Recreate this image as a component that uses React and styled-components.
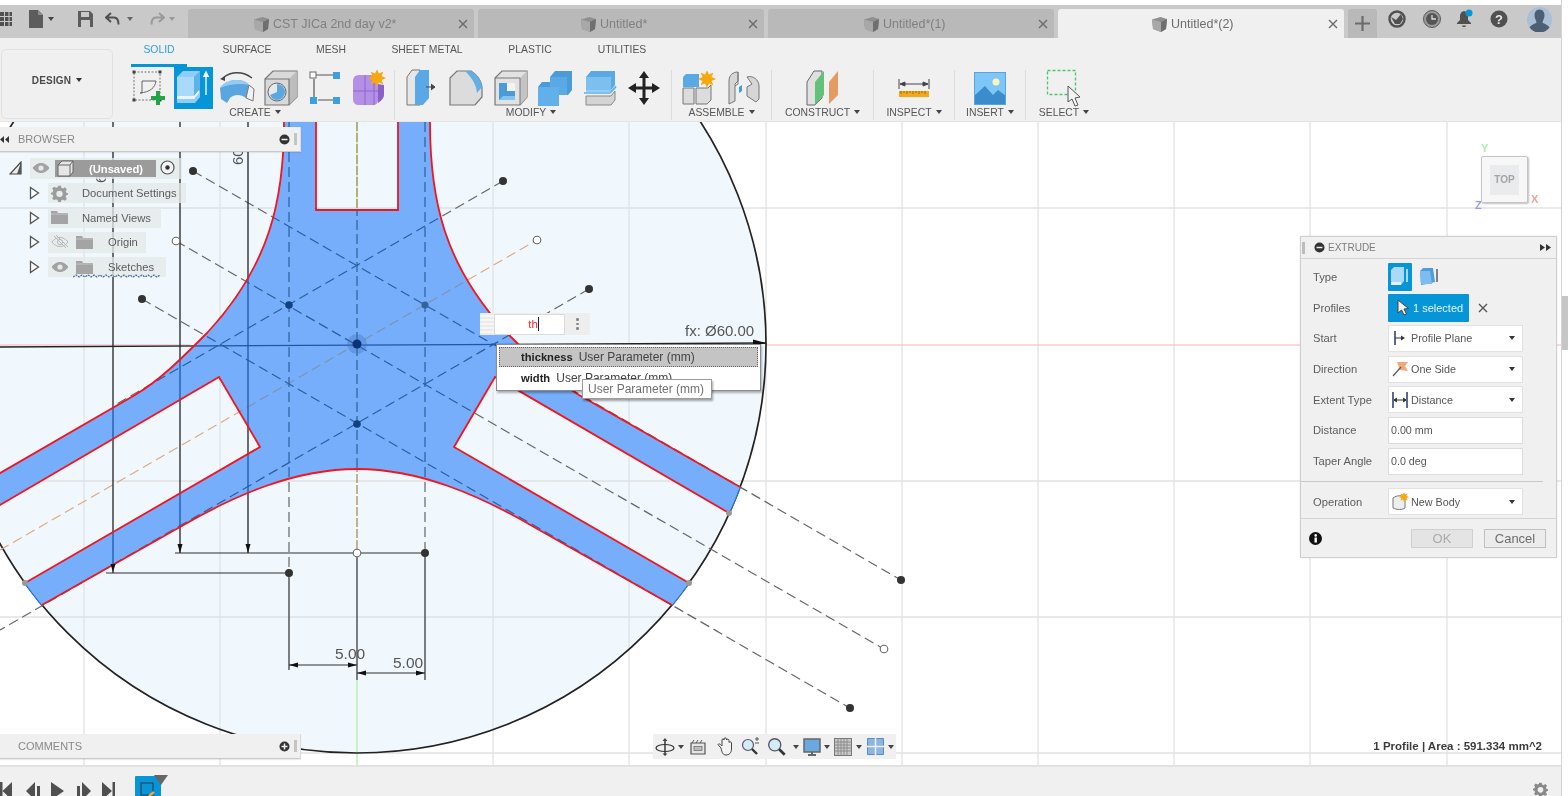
import React from "react";
import styled, { createGlobalStyle, css } from "styled-components";

const Global = createGlobalStyle`
  html, body { margin: 0; padding: 0; background: #fff; overflow: hidden; }
  * { box-sizing: border-box; }
  #root { width: 1568px; height: 796px; }
`;
const FONT = `"Liberation Sans", Arial, sans-serif`;

const Page = styled.div`
  width: 1568px; height: 796px; display: flex; overflow: hidden; background: #fff;
  font-family: ${FONT}; filter: blur(0.4px);
`;
const Screen = styled.div`width: 1561px; height: 796px; display: flex; flex-direction: column; padding-top: 5px; flex: none;`;
const ScrollStrip = styled.div`width: 7px; height: 796px; background: #fff; border-left: 1px solid #d4d4d4; padding-top: 296px; flex: none;`;
const ScrollThumb = styled.div`height: 54px; background: #c6c6c6;`;

/* ---------- title bar ---------- */
const TitleBar = styled.div`height: 33px; background: #c9c9c9; display: flex; align-items: flex-end; flex: none;`;
const Quick = styled.div`width: 188px; height: 33px; flex: none; display: flex; align-items: center; position: relative; padding-bottom: 5px;`;
const QuickSlot = styled.div`width: ${p => p.$w}px; display: flex; align-items: center; flex: none;`;
const Caret = styled.span`
  display: inline-block; flex: none; width: 0; height: 0;
  border-left: ${p => p.$s || 3}px solid transparent; border-right: ${p => p.$s || 3}px solid transparent;
  border-top: ${p => (p.$s || 3) + 1}px solid ${p => p.$c || "#444"}; margin-left: ${p => p.$ml ?? 4}px;
`;
const DocTab = styled.div`
  width: 286px; height: 29px; margin-right: 4px; flex: none; display: flex; align-items: center; position: relative;
  background: ${p => (p.$active ? "#f0f0f0" : "#b9b9b9")}; color: ${p => (p.$active ? "#6c6c6c" : "#808080")};
  font-size: 12.5px; border-radius: 3px 3px 0 0; padding: 1px 0 0 ${p => p.$pl}px; gap: 3px;
`;
const TabClose = styled.span`position: absolute; right: 5px; top: 9px; width: 12px; height: 12px; display: flex;`;
const PlusTab = styled.div`width: 29px; height: 29px; background: #b9b9b9; border-radius: 3px 3px 0 0; display: flex; align-items: center; justify-content: center; flex: none;`;
const TopIcons = styled.div`display: flex; height: 33px; align-items: center; padding-bottom: 5px; position: relative; flex: none;`;
const TopIcon = styled.div`width: ${p => p.$w}px; display: flex; justify-content: center; flex: none;`;

/* ---------- ribbon ---------- */
const Ribbon = styled.div`height: 84px; background: #f0f0f0; display: flex; flex: none; border-bottom: 1px solid #e4e4e4;`;
const DesignCol = styled.div`width: 124px; flex: none; padding: 11px 11px 2px 1px;`;
const DesignBtn = styled.div`
  height: 70px; border: 1px solid #e2e2e2; border-radius: 5px; display: flex; align-items: center; justify-content: center;
  font-size: 10px; font-weight: bold; color: #4a4a4a; letter-spacing: .2px; padding-bottom: 8px;
`;
const RibbonMain = styled.div`display: flex; flex-direction: column;`;
const RibbonTabs = styled.div`height: 29px; display: flex; padding-left: 7px;`;
const RibbonTab = styled.div`
  width: ${p => p.$w}px; height: 29px; padding-top: 6px; text-align: center; font-size: 10.4px; line-height: 12px;
  color: ${p => (p.$active ? "#2c9fdc" : "#555")};
  ${p => p.$active && css`border-bottom: 3px solid #0696d7; border-radius: 2px 2px 0 0;`}
`;
const Groups = styled.div`display: flex; height: 54px;`;
const Group = styled.div`width: ${p => p.$w}px; display: flex; flex-direction: column; align-items: center; flex: none;`;
const Tools = styled.div`height: 42px; display: flex; justify-content: center; flex: none;`;
const Tool = styled.div`
  width: ${p => p.$w || 44}px; height: 42px; flex: none; display: flex; align-items: center; justify-content: center;
  ${p => p.$active && css`background: #0696d7; width: 39px; margin: 0 2.5px;`}
`;
const GroupLabel = styled.div`
  height: 12px; flex: none; display: flex; align-items: center; font-size: 10.4px; color: #555; margin-top: -3px; padding-right: ${p => p.$pr || 0}px;
`;
const Sep = styled.div`width: 1px; height: 50px; margin-top: 3px; background: #dcdcdc; flex: none;`;

/* ---------- canvas ---------- */
const Canvas = styled.div`position: relative; flex: 1; background: #fff; overflow: hidden;`;
const Drawing = styled.svg`position: absolute; left: 0; top: 0; width: 1561px; height: 643px; display: block;`;

const SidePanel = styled.div`
  position: absolute; left: 0; top: ${p => p.$top}px; width: 301px; height: 25px; background: #f0f0f0;
  border-right: 1px solid #dcdcdc; border-bottom: 1px solid #c8c8c8; display: flex; align-items: center; padding-left: 18px;
  font-size: 11px; color: #888; box-shadow: 0 1px 1px rgba(0,0,0,.08);
`;
const PanelEnd = styled.div`position: absolute; right: 3px; top: 6px; display: flex; align-items: center; gap: 4px;`;
const Handle = styled.div`width: 3px; height: 12px; background: #c4c4c4;`;
const PanelLeft = styled.div`position: absolute; left: 0; top: 9px; display: flex;`;

const Tree = styled.div`position: absolute; left: 0; top: 36px; display: flex; flex-direction: column; gap: 4px;`;
const TreeRow = styled.div`height: 20.7px; display: flex; align-items: center; padding-left: ${p => p.$pl}px;`;
const Chip = styled.div`
  display: flex; align-items: center; height: 20.7px; width: ${p => p.$w}px; margin-left: ${p => p.$ml}px; position: relative;
  background: rgba(228,232,232,.78); font-size: 11.2px; color: #5c5c5c; flex: none;
`;
const ChipText = styled.span`position: absolute; left: ${p => p.$l}px; white-space: nowrap;`;
const ChipIcon = styled.span`position: absolute; left: ${p => p.$l}px; top: 2px; display: flex;`;
const SelBar = styled.div`
  position: absolute; left: 25px; top: 2px; width: 101px; height: 17px; background: #9b9b9b; color: #fff; font-weight: bold;
  font-size: 11.2px; display: flex; align-items: center; padding-left: 34px;
`;
const Wave = styled.svg`position: absolute; left: 25px; bottom: -1px;`;

const NavBar = styled.div`
  position: absolute; left: 653px; top: 612px; width: 243px; height: 25px; background: #f0f0f0; display: flex; align-items: center; padding-left: 2px;
`;
const NavSlot = styled.div`width: ${p => p.$w}px; display: flex; align-items: center; flex: none;`;
const Status = styled.div`position: absolute; right: 19px; top: 618px; font-size: 11.5px; font-weight: bold; color: #3c3c3c; white-space: nowrap;`;

/* view cube */
const Cube = styled.div`
  position: absolute; left: 1481px; top: 34px; width: 47px; height: 47px; background: #f7f7f7; border: 1px solid #c4c4c4;
  border-radius: 2px; box-shadow: 1px 1px 2px rgba(0,0,0,.25); display: flex; align-items: center; justify-content: center;
`;
const CubeFace = styled.div`width: 29px; height: 30px; background: #e9ebed; font-size: 10px; font-weight: bold; color: #a4a4a4; display: flex; align-items: center; justify-content: center;`;
const AxisLetter = styled.span`position: absolute; left: ${p => p.$l}px; top: ${p => p.$t}px; font-size: 11px; font-weight: bold; color: ${p => p.$c};`;

/* dimension input */
const DimBox = styled.div`position: absolute; left: 480px; top: 191px; width: 110px; height: 22px; display: flex; background: #eeeeee; align-items: center;`;
const Grip = styled.div`width: 14px; height: 22px; background: repeating-linear-gradient(0deg,#ebebeb 0 2px,#f6f6f6 2px 4px);`;
const DimInput = styled.div`width: 71px; height: 21px; background: #fff; border: 1px solid #dcdcdc; display: flex; align-items: center; justify-content: center; font-size: 11.5px; color: #ee2a2a; padding-left: 8px;`;
const TextCaret = styled.span`display: inline-block; width: 1px; height: 14px; background: #222;`;
const Kebab = styled.div`flex: 1; display: flex; flex-direction: column; align-items: center; gap: 2px;`;
const Dot = styled.span`width: 2.5px; height: 2.5px; background: #888; border-radius: 50%;`;

const Drop = styled.div`
  position: absolute; left: 496px; top: 222px; width: 265px; height: 47px; background: #fff; border: 1px solid #8c8c8c;
  box-shadow: 1px 2px 2px rgba(0,0,0,.3); padding: 2px 2px; font-size: 12px; color: #444;
`;
const DropRow = styled.div`
  height: ${p => (p.$on ? 20 : 22)}px; display: flex; align-items: center; padding-left: 22px; white-space: nowrap;
  ${p => p.$on && css`background: #c4c4c4; outline: 1px dotted #666; outline-offset: -1px;`}
`;
const DropKey = styled.b`color: #222; margin-right: 6px; font-size: 11.2px;`;
const Tip = styled.div`
  position: absolute; left: 582px; top: 257px; width: 130px; height: 20px; background: #fff; border: 1px solid #9a9a9a;
  box-shadow: 1px 2px 2px rgba(0,0,0,.35); font-size: 12px; color: #707070; display: flex; align-items: center; padding-left: 5px; white-space: nowrap;
`;

/* extrude */
const Panel = styled.div`
  position: absolute; left: 1300px; top: 114px; width: 257px; height: 322px; background: #f0f0f0; border: 1px solid #cfcfcf;
  box-shadow: 0 0 2px rgba(0,0,0,.1); display: flex; flex-direction: column; font-size: 11px; color: #555;
`;
const PanelHead = styled.div`height: 22px; flex: none; border-bottom: 1px solid #d4d4d4; display: flex; align-items: center; padding: 0 5px 0 1px; color: #7c7c7c; font-size: 10px;`;
const HeadGrip = styled.div`width: 3px; height: 12px; background: #bdbdbd; margin-right: 9px;`;
const HeadTitle = styled.span`margin-left: 3px;`;
const Spacer = styled.div`flex: 1;`;
const PanelBody = styled.div`padding: 2.6px 0 1px 12px; flex: none;`;
const Row = styled.div`height: 30.7px; display: flex; align-items: center;`;
const RowLabel = styled.div`width: 75px; flex: none; font-size: 11.2px; color: #5c5c5c; white-space: nowrap;`;
const Selector = styled.div`
  width: 135px; height: 27px; background: #fff; border: 1px solid #e2e2e2; display: flex; align-items: center; padding: 0 7px 0 2px; gap: 2px;
  font-size: 10.8px; color: #555; white-space: nowrap;
`;
const Input = styled(Selector)`padding-left: 2px; border-color: #dcdcdc; font-size: 10.7px;`;
const TypeBtn = styled.div`width: 24px; height: 28px; display: flex; align-items: center; justify-content: center; border-radius: 1px; margin-right: 5px; ${p => p.$on && css`background: #0696d7;`}`;
const PickBtn = styled.div`width: 81px; height: 28px; background: #0696d7; color: #e6f4fb; display: flex; align-items: center; padding-left: 8px; gap: 4px; font-size: 11px; border-radius: 1px;`;
const ClearX = styled.div`margin-left: 8px; display: flex;`;
const Rule = styled.div`height: 1px; width: 242px; background: #c8c8c8; margin-top: 5px; margin-left: -12px; margin-bottom: 4px;`;
const PanelFoot = styled.div`flex: 1; border-top: 1px solid #d4d4d4; display: flex; align-items: center; padding: 0 10px 0 8px; gap: 11px;`;
const FootBtn = styled.div`width: 62px; height: 19px; border: 1px solid ${p => (p.$off ? "#d0d0d0" : "#c0c0c0")}; background: ${p => (p.$off ? "#e4e4e4" : "#ececec")}; display: flex; align-items: center; justify-content: center; font-size: 13px; color: ${p => (p.$off ? "#aaa" : "#6c6c6c")};`;

/* timeline */
const Timeline = styled.div`height: 31px; flex: none; background: #f0f0f0; border-top: 2px solid #e2e2e2; display: flex; position: relative; overflow: hidden;`;
const Player = styled.div`display: flex; width: 135px; flex: none; padding-top: 15px;`;
const PlayBtn = styled.div`width: 25.6px; flex: none; display: flex;`;
const Feature = styled.div`position: relative; width: 26px; height: 22px; margin-top: 9px; background: #0696d7; border-radius: 1px 1px 0 0; display: flex; justify-content: center; padding-top: 6px;`;
const Flag = styled.div`position: absolute; right: -7px; top: -1px; width: 0; height: 0; border-left: 7px solid transparent; border-right: 7px solid transparent; border-top: 10px solid #666;`;
const GearEnd = styled.div`margin-left: auto; margin-right: 13px; padding-top: 15px;`;

/* ---------- icons ---------- */
const Cube3D = ({ s = 17 }) => (
  <svg width={s} height={s} viewBox="0 0 17 17"><path d="M1 3.5 9.5 1 16 3l-1 10-5 3L2 13Z" fill="#8f8f8f"/><path d="M1 3.5 10 6v10L2 13Z" fill="#a8a8a8"/><path d="M10 6l6-3-1 10-5 3Z" fill="#6f6f6f"/></svg>
);
const X = ({ c = "#6a6a6a", s = 12 }) => (
  <svg width={s} height={s} viewBox="0 0 12 12"><path d="M2 2l8 8M10 2l-8 8" stroke={c} strokeWidth="1.4"/></svg>
);
const Eye = ({ off }) => (
  <svg width="18" height="16" viewBox="0 0 18 16"><path d="M1 8c4-6 12-6 16 0-4 6-12 6-16 0Z" fill={off ? "none" : "#a2a2a2"} stroke={off ? "#b8b8b8" : "#a2a2a2"}/><circle cx="9" cy="8" r="2.6" fill={off ? "none" : "#e4e8e8"} stroke={off ? "#b8b8b8" : "none"}/>{off && <path d="M3 2l12 12M5 1l12 12" stroke="#b8b8b8"/>}</svg>
);
const Folder = () => (
  <svg width="17" height="16" viewBox="0 0 17 16"><path d="M0 2h6l1 2h10v11H0Z" fill="#a4a4a4"/><path d="M0 5h17" stroke="#c4c4c4"/></svg>
);
const Gear = ({ c = "#9c9c9c", s = 17 }) => (
  <svg width={s} height={s} viewBox="0 0 24 24"><path fillRule="evenodd" d="M10 1h4l.6 3 2.4 1 2.6-1.7 2.8 2.800L20.700 8.700l1 2.400 3 .6v2l-3 .9-1 2.400 1.700 2.600-2.800 2.800-2.600-1.700-2.400 1L14 24h-4l-.6-3-2.400-1-2.600 1.700-2.800-2.800 1.700-2.600-1-2.400L-.7 13v-2l3-.9 1-2.400L1.600 5.100 4.400 2.300 7 4l2.400-1ZM12 8a4.500 4.500 0 1 0 0 9 4.500 4.500 0 0 0 0-9Z" fill={c}/></svg>
);
const Tri = () => (
  <svg width="11" height="14" viewBox="0 0 11 14"><path d="M1.500 1.500v11l8-5.500Z" fill="#fff" stroke="#555" strokeWidth="1.300"/></svg>
);
const CircMinus = ({ plus }) => (
  <svg width="11" height="11" viewBox="0 0 11 11"><circle cx="5.500" cy="5.500" r="5" fill="#333"/><path d="M2.500 5.500h6" stroke="#eee" strokeWidth="1.500"/>{plus && <path d="M5.500 2.500v6" stroke="#eee" strokeWidth="1.500"/>}</svg>
);
const SketchI = () => (
  <svg width="34" height="38" viewBox="0 0 34 38"><rect x="2" y="3" width="26" height="28" fill="none" stroke="#777" strokeDasharray="2 1.500"/>
    {[[2,3],[28,3],[2,31],[28,31]].map(([x,y],i)=><rect key={i} x={x-1.500} y={y-1.500} width="3" height="3" fill="#444"/>)}
    <path d="M8 24h2V12h14M8 24c10-1 15-5 16-12" fill="none" stroke="#666"/>
    <path d="M24 22h4v5h5v4h-5v5h-4v-5h-5v-4h5Z" fill="#22a547"/></svg>
);
const ExtrudeI = () => (
  <svg width="36" height="38" viewBox="0 0 36 38"><path d="M2 8 8 2h17v26l-5 6H2Z" fill="#8fcdf6"/><path d="M19 8l6-6v19l-6 6Z" fill="#5db2ea"/><path d="M2 8h17v19H2Z" fill="#a9daf9"/><path d="M2 27h17l5-6v3l-5 6H2Z" fill="#eaf4fa"/><path d="M31 26V5M28.500 8 31 3l2.500 5" stroke="#fff" fill="#fff" strokeWidth="1.300"/></svg>
);
const RevolveI = () => (
  <svg width="36" height="36" viewBox="0 0 36 36"><path d="M4 8C12 1 24 1 33 8" fill="none" stroke="#444" strokeWidth="1.300"/><path d="M1 9l5-3v5Z" fill="#444"/><path d="M1 18C8 8 25 8 30 15l-3 13c-5-4-12-4-16 0l-3 5-6-4Z" fill="#5aa6e0"/><path d="M1 18C8 8 25 8 30 15c-8-2-20-1-29 3Z" fill="#93cbf2"/><path d="M30 15l5 4-1 12-7-3Z" fill="#f2f2f2" stroke="#777"/></svg>
);
const HoleI = () => (
  <svg width="34" height="36" viewBox="0 0 34 36"><path d="M1 9 9 1h24v26l-8 8H1Z" fill="#d9d9d9" stroke="#777" strokeWidth="1.200"/><path d="M25 9l8-8v26l-8 8Z" fill="#bcbcbc"/><path d="M1 9h24v26" fill="none" stroke="#777" strokeWidth="1.200"/><circle cx="13" cy="22" r="9" fill="#e8e8e8" stroke="#666"/><path d="M13 22V14a8 8 0 0 1 0 16c-3 0-6-2-7-5Z" fill="#5aa8e0"/></svg>
);
const NodesI = () => (
  <svg width="32" height="34" viewBox="0 0 32 34"><path d="M7 4h18M5 8v19M9 29h17" stroke="#555" strokeWidth="1.200"/><rect x="1" y="1" width="6" height="6" fill="#fff" stroke="#666"/><rect x="24" y="1" width="7" height="7" fill="#3e9fe0"/><rect x="1" y="26" width="7" height="7" fill="#3e9fe0"/><rect x="24" y="26" width="7" height="7" fill="#3e9fe0"/></svg>
);
const Sun = ({ x, y, r = 8 }) => {
  const pts = [];
  for (let i = 0; i < 16; i++) { const a = i * Math.PI / 8; const q = i % 2 ? r * .55 : r; pts.push(`${x + q * Math.cos(a)},${y + q * Math.sin(a)}`); }
  return <polygon points={pts.join(" ")} fill="#f7a80f"/>;
};
const PurpleI = () => (
  <svg width="34" height="36" viewBox="0 0 34 36"><path d="M1 11 Q1 5 7 5h19v25q0 5-5 5H7q-6 0-6-6Z" fill="#b48fe6"/><path d="M1 21h25M13 5v30M22 9v26" stroke="#8d66c8"/><path d="M26 14l6 1v10q0 4-6 8Z" fill="#8a60c6"/><Sun x={25} y={8} r={9}/></svg>
);
const PressI = () => (
  <svg width="32" height="38" viewBox="0 0 32 38"><path d="M1 8 6 1h8v35H1Z" fill="#e6e6e6" stroke="#777"/><path d="M9 8l5-7h9v28l-6 7H9Z" fill="#5aa9e6"/><path d="M20 18h8M25 15l4 3-4 3" stroke="#444" fill="#444"/></svg>
);
const FilletI = () => (
  <svg width="34" height="36" viewBox="0 0 34 36"><path d="M1 8 8 1h14c6 4 10 8 11 16v10l-7 8H1Z" fill="#dcdcdc" stroke="#777" strokeWidth="1.200"/><path d="M16 1h6c6 4 10 8 11 16l-5 6c-1-9-5-15-12-22Z" fill="#62afe6"/></svg>
);
const ChamferI = () => (
  <svg width="34" height="36" viewBox="0 0 34 36"><path d="M1 8 8 1h25v26l-7 8H1Z" fill="#e2e2e2" stroke="#777" strokeWidth="1.200"/><path d="M26 8l7-7v26l-7 8Z" fill="#c4c4c4"/><path d="M1 8h25v27" fill="none" stroke="#777"/><path d="M5 13h8v8h8v9H5Z" fill="#4a9bd6"/><path d="M13 13h8v8h-8Z" fill="#f3f3f3"/><path d="M5 30l4-4h12v4Z" fill="#83c3f0"/></svg>
);
const CombineI = () => (
  <svg width="36" height="36" viewBox="0 0 36 36"><path d="M13 7 18 1h17v19l-4 5H22v8l-3 3H1V17l4-5h8Z" fill="#4a9bd6"/><path d="M13 7h17v18h-8v-8H13Z" fill="#58a9e4"/><path d="M1 17h21v19H1Z" fill="#62b0ea"/></svg>
);
const OffsetI = () => (
  <svg width="34" height="36" viewBox="0 0 34 36"><path d="M3 7 8 1h24v14l-4 5H3Z" fill="#5aa9e4"/><path d="M3 7h25v13H3Z" fill="#7cc0f0"/><path d="M3 21h25l5-5" stroke="#7cc0f4" fill="none" strokeWidth="1.500"/><path d="M1 23h26l6-6" stroke="#5ab0ee" fill="none" strokeWidth="1.500"/><path d="M3 26h25l4-5v9l-4 5H3Z" fill="#d4d4d4" stroke="#888"/></svg>
);
const MoveI = () => (
  <svg width="34" height="36" viewBox="0 0 34 36"><path d="M17 1l5 7h-3.500v8.500H25V13l8 5-8 5v-3.500h-6.500V28H22l-5 7-5-7h3.500v-8.500H9V23l-8-5 8-5v3.500h6.500V8H12Z" fill="#222"/></svg>
);
const AssembleI = () => (
  <svg width="34" height="34" viewBox="0 0 34 34"><path d="M1 17h11v16H1ZM14 17h12l3 -3v15l-4 4H14Z" fill="#dcdcdc" stroke="#777"/><path d="M1 6l3-3h13v13H1Z" fill="#58a9e4"/><Sun x={25} y={8} r={9}/></svg>
);
const JointI = () => (
  <svg width="32" height="34" viewBox="0 0 32 34"><path d="M1 10c0-6 4-9 9-9v9l-3 3v17l-6 3Z" fill="#d6d6d6" stroke="#777"/><path d="M10 1v12l-3 2" fill="none" stroke="#777"/><path d="M19 6c6-2 12 3 12 9v13l-3 3-9-6V16l5-3Z" fill="#d6d6d6" stroke="#777"/><path d="M11 16l3-2v6l-3 2Z" fill="#3e9fe0"/></svg>
);
const ConstructI = () => (
  <svg width="34" height="36" viewBox="0 0 34 36"><path d="M1 12 8 1h8v27l-7 7H1Z" fill="#e0e0e0" stroke="#666"/><path d="M9 35V12l9-11v24Z" fill="#62c27a"/><path d="M23 34V12l9-11v24Z" fill="#e59a64"/></svg>
);
const InspectI = () => (
  <svg width="32" height="20" viewBox="0 0 32 20"><path d="M1 1v10M31 1v10M2 6h28M2 6l5-2v4ZM30 6l-5-2v4Z" stroke="#444" fill="#444"/><rect x="1" y="13" width="30" height="6" fill="#f2a81a"/><path d="M3 13v3M6 13v2M9 13v3M12 13v2M15 13v3M18 13v2M21 13v3M24 13v2M27 13v3" stroke="#9a6a10"/></svg>
);
const InsertI = () => (
  <svg width="32" height="33" viewBox="0 0 32 33"><rect width="32" height="33" fill="#7ec6f7"/><circle cx="22" cy="10" r="3.500" fill="#fdf3b8"/><path d="M0 24l11-10 8 9 5-5 8 6v9H0Z" fill="#3a8ccb"/><rect x=".5" y=".5" width="31" height="32" fill="none" stroke="#58a4dc"/></svg>
);
const SelectI = () => (
  <svg width="36" height="38" viewBox="0 0 36 38"><rect x="1.500" y="1.500" width="28" height="24" fill="none" stroke="#4cc46c" strokeWidth="1.300" strokeDasharray="3 2"/><path d="M22 17v16l4-3 3 7 3-1-3-7 5-1Z" fill="#f4f4f4" stroke="#555"/></svg>
);
const Arrow = () => (
  <svg width="13" height="17" viewBox="0 0 13 17"><path d="M2 1v13l3.500-3 2.500 5 2.500-1-2.500-5 4.500-.5Z" fill="#f2f2f2" stroke="#444"/></svg>
);

const Orbit = () => (<svg width="20" height="20" viewBox="0 0 20 20"><path d="M10 1l2.500 3h-1.700v12.500h1.700L10 19l-2.500-2.500h1.700V4H7.500Z" fill="#444"/><ellipse cx="10" cy="11" rx="9" ry="3.500" fill="none" stroke="#333" strokeWidth="1.200"/></svg>);
const LookAt = () => (<svg width="18" height="18" viewBox="0 0 18 18"><path d="M2 5h14v11H2Z" fill="#e4e4e4" stroke="#555" strokeWidth="1.200"/><rect x="5" y="8.500" width="8" height="4" fill="#bbb" stroke="#666" strokeWidth=".7"/><path d="M3 5l2-3M7 5l2-3M11 5l2-3" stroke="#555"/></svg>);
const Hand = () => (<svg width="19" height="19" viewBox="0 0 19 19"><path d="M5 11 2 7.500c1-1.500 2.500 0 4 1.500V3c0-1.600 2-1.600 2 0V2c0-1.500 2.500-1.500 2.500 0v1c.5-1.500 2.500-1 2.500 .5v2c.5-1 2.500-.8 2.500 .5V12c0 4-2.500 6-5.500 6S6 16 5 11Z" fill="#f4f4f4" stroke="#444"/></svg>);
const ZoomI = ({ s = 19, extra }) => (<svg width={s} height={s} viewBox="0 0 19 19"><circle cx="7" cy="8" r="5.500" fill="#d3ecf5" stroke="#556" strokeWidth="1.200"/><path d="M11 12l5 5" stroke="#333" strokeWidth="2.400"/>{extra && <path d="M14 2h4M16 0v4M14 6h4" stroke="#555"/>}</svg>);
const Display = () => (<svg width="18" height="18" viewBox="0 0 18 18"><rect x="1" y="1" width="16" height="13" fill="#6aa8e0" stroke="#666" strokeWidth="1.500"/><path d="M5 17h8M9 14v3" stroke="#666" strokeWidth="2"/></svg>);
const GridI = () => (<svg width="18" height="18" viewBox="0 0 18 18"><rect x=".5" y=".5" width="17" height="17" fill="#c8c8c8" stroke="#777"/><path d="M4 0v18M7 0v18M10 0v18M13 0v18M0 4h18M0 7h18M0 10h18M0 13h18" stroke="#808080" strokeWidth=".8"/></svg>);
const Views = () => (<svg width="17" height="17" viewBox="0 0 17 17"><path d="M.5.5h16v16H.5Z" fill="#8ab6e2" stroke="#5d8bbd"/><path d="M8.500 0v17M0 8.500h17" stroke="#f0f0f0" strokeWidth="1.500"/></svg>);

/* ---------- sketch geometry ---------- */
const SHAPE = "M284 115 L284 122 C284 200 270 265 207 333 C180 360 160 380 135 395 L0 473 L-10 479 L-10 511 L219 377 L260 447 L25 583 A409 409 0 0 0 42 605 L180 527 C235 495 295 469 357 469 C419 469 479 495 534 527 L672 605 A409 409 0 0 0 689 583 L454 447 L495 377 L729 513 A409 409 0 0 0 740 487 L579 395 C554 380 534 360 507 333 C444 265 430 200 430 122 L430 115 L398 115 L398 210 L316 210 L316 115 Z";
const RED = "M284 122 C284 200 270 265 207 333 C180 360 160 380 135 395 L-5 476 M-5 508 L219 377 L260 447 L25 583 M42 605 L180 527 C235 495 295 469 357 469 C419 469 479 495 534 527 L672 605 M689 583 L454 447 L495 377 L729 513 M740 487 L579 395 C554 380 534 360 507 333 C444 265 430 200 430 122 M398 122 L398 210 L316 210 L316 122";
const gridX = [84, 220, 493, 629, 766, 902, 1038, 1174, 1310, 1447];
const gridY = [208, 481, 617, 753];

const Sketch = () => (
  <Drawing viewBox="0 122 1561 643" aria-hidden="true">
    <defs>
      <clipPath id="inShape"><path d={SHAPE}/></clipPath>
      <g id="dashes" fill="none" stroke="currentColor" strokeWidth="1.200" strokeDasharray="10 5">
        <path d="M193 171 L901 580"/>
        <path d="M176 241 L884 649"/>
        <path d="M142 299 L850 708"/>
        <path d="M503 181 L115 405"/>
        <path d="M589 289 L0 630"/>
        <path d="M289 122 V573"/>
        <path d="M425 122 V553"/>
      </g>
      <g id="solids" fill="none" stroke="currentColor" strokeWidth="1.300">
        <path d="M113 122 V573"/>
        <path d="M180 122 V553"/>
        <path d="M248 122 V553"/>
        <path d="M0 347 L766 343"/>
      </g>
    </defs>
    <circle cx="357" cy="344" r="409" fill="#f0f8fe"/>
    <g stroke="#dfe2e3" strokeWidth="1.300">
      {gridX.map(x => <path key={x} d={`M${x} 122V765`}/>)}
      {gridY.map(y => <path key={y} d={`M0 ${y}H1561`}/>)}
    </g>
    <path d="M0 345H190M766 345H1561" stroke="#f6b4b4" strokeWidth="1.200"/>
    <path d="M357 122V210M357 680V765" stroke="#b4f0b4" strokeWidth="1.400"/>
    <circle cx="357" cy="344" r="409" fill="none" stroke="#222" strokeWidth="1.700"/>
    <path d={SHAPE} fill="#76aefc"/>
    <path d="M25 583 A409 409 0 0 0 42 605 M672 605 A409 409 0 0 0 689 583 M729 513 A409 409 0 0 0 740 487" fill="none" stroke="#2a74d8" strokeWidth="2"/>
    <path d="M0 550 L537 240" stroke="#e0ab80" strokeWidth="1.300" strokeDasharray="10 5" fill="none"/>
    <path d="M357 122V553" stroke="#b08a50" strokeWidth="1.300" strokeDasharray="9 2" fill="none"/>
    <g color="#666"><use href="#dashes"/></g>
    <g color="#222"><use href="#solids"/></g>
    <g clipPath="url(#inShape)">
      <path d={SHAPE} fill="#76aefc"/>
      <path d="M0 550 L537 240" stroke="#7f93ad" strokeWidth="1.300" strokeDasharray="10 5" fill="none"/>
      <path d="M357 122V553" stroke="#2f679f" strokeWidth="1.300" strokeDasharray="10 4" fill="none"/>
      <g color="#2b5f9e"><use href="#dashes"/></g>
      <g color="#1f56a6"><use href="#solids"/></g>
    </g>
    <path d={RED} fill="none" stroke="#f4141e" strokeWidth="1.800"/>
    <g fill="none" stroke="#2e2e2e" strokeWidth="1.200">
      <path d="M175 553H357M361 553H425"/>
      <path d="M106 573H289"/>
      <path d="M289 573V670M425 553V680M357 557V680"/>
      <path d="M289 665H357M357 673H425"/>
    </g>
    <g fill="#111">
      <path d="M113 572l-2.500-8h5Z"/><path d="M180 553l-2.500-9h5Z"/><path d="M248 553l-2.500-9h5Z"/>
      <path d="M289 665l9-2.500v5Z"/><path d="M357 665l-9-2.500v5Z"/><path d="M357 673l9-2.500v5Z"/><path d="M425 673l-9-2.500v5Z"/>
      <path d="M766 343l-13-3.500v7Z"/>
    </g>
    <circle cx="357" cy="344" r="10" fill="#3f6fb8" opacity=".35"/>
    <circle cx="357" cy="344" r="4.500" fill="#0b3478"/>
    <g fill="#12417f">
      <circle cx="289" cy="305" r="3.800"/><circle cx="425" cy="305" r="3.500" fill="#33639c"/><circle cx="357" cy="424" r="3.800"/>
    </g>
    <g fill="#333">
      <circle cx="193" cy="171" r="4"/><circle cx="142" cy="299" r="4"/><circle cx="503" cy="181" r="4"/><circle cx="589" cy="289" r="4"/>
      <circle cx="901" cy="580" r="4"/><circle cx="850" cy="708" r="4"/><circle cx="425" cy="553" r="4"/><circle cx="289" cy="573" r="4"/>
    </g>
    <g fill="#fff" stroke="#666" strokeWidth="1.100">
      <circle cx="176" cy="241" r="3.800"/><circle cx="537" cy="240" r="3.800"/><circle cx="884" cy="649" r="3.800"/><circle cx="357" cy="553" r="3.800"/>
    </g>
    <g fill="#999"><circle cx="25" cy="583" r="3"/><circle cx="729" cy="513" r="3"/><circle cx="689" cy="583" r="3"/></g>
    <g fontFamily={FONT} fill="#555">
      <text x="685" y="336" fontSize="15">fx: Ø60.00</text>
      <text x="335" y="659" fontSize="15.500">5.00</text>
      <text x="393" y="668" fontSize="15.500">5.00</text>
      <text transform="translate(243 165) rotate(-90)" fontSize="15">60</text>
      <text transform="translate(106 183) rotate(-90)" fontSize="15">60</text>
    </g>
  </Drawing>
);

const tabs = [
  { t: "CST JICa 2nd day v2*", pl: 65 },
  { t: "Untitled*", pl: 102 },
  { t: "Untitled*(1)", pl: 95 },
  { t: "Untitled*(2)", pl: 93, active: true },
];

const Dropdown = ({ icon, label }) => (
  <Selector>{icon}<span>{label}</span><Spacer/><Caret $c="#333"/></Selector>
);
const StartI = () => (<svg width="18" height="18" viewBox="0 0 18 18"><path d="M4 2v14" stroke="#1e3a6a" strokeWidth="1.500"/><path d="M4 9h7" stroke="#333"/><path d="M14 9l-4-2.500v5Z" fill="#333"/></svg>);
const DirI = () => (<svg width="18" height="18" viewBox="0 0 18 18"><path d="M6 2h11l-3 4 3 5-8-1Z" fill="#f0a878"/><path d="M2 16 10 7" stroke="#555" strokeWidth="1.200"/></svg>);
const ExtI = () => (<svg width="18" height="18" viewBox="0 0 18 18"><path d="M2 1v16M16 1v16" stroke="#1e3a6a" strokeWidth="1.500"/><path d="M3 9h12M6 7l-3 2 3 2M12 7l3 2-3 2" stroke="#333" fill="#333"/></svg>);
const BodyI = () => (<svg width="18" height="18" viewBox="0 0 18 18"><path d="M2 5c4-3 9-3 12 0v10c-3 2-8 2-12 0Z" fill="#eee" stroke="#777"/><Sun x={13} y={4} r={5}/></svg>);

export default function App() {
  return (
    <Page>
      <Global/>
      <Screen>
        <TitleBar>
          <Quick>
            <QuickSlot $w={29}>
              <svg width="12" height="14" viewBox="0 0 12 14"><path d="M0 0h4v4H0ZM5 0h3.500v4H5ZM9.500 0H12v4H9.500ZM0 5h4v4H0ZM5 5h3.500v4H5ZM9.500 5H12v4H9.500ZM0 10h4v4H0ZM5 10h3.500v4H5ZM9.500 10H12v4H9.500Z" fill="#505050"/></svg>
            </QuickSlot>
            <QuickSlot $w={49}>
              <svg width="14" height="18" viewBox="0 0 14 18"><path d="M0 0h9l5 5v13H0Z" fill="#5c5c5c"/><path d="M9 0v5h5" fill="#8c8c8c"/></svg>
              <Caret $ml={5}/>
            </QuickSlot>
            <QuickSlot $w={27}>
              <svg width="15" height="16" viewBox="0 0 15 16"><path d="M0 0h12l3 3v13H0Z" fill="#5c5c5c"/><rect x="3" y="1" width="8" height="5" fill="#c9c9c9"/><rect x="3" y="9" width="9" height="7" fill="#c9c9c9"/></svg>
            </QuickSlot>
            <QuickSlot $w={45}>
              <svg width="15" height="14" viewBox="0 0 15 14"><path d="M6 1 1 5.500 6 10M1.500 5.500H9c3 0 4.500 2.500 4.500 7" fill="none" stroke="#505050" strokeWidth="2"/></svg>
              <Caret $ml={7} $c="#666"/>
            </QuickSlot>
            <QuickSlot $w={30}>
              <svg width="15" height="14" viewBox="0 0 15 14"><path d="M9 1l5 4.500L9 10M13.500 5.500H6c-3 0-4.500 2.500-4.500 7" fill="none" stroke="#9a9a9a" strokeWidth="2"/></svg>
              <Caret $ml={4} $c="#999"/>
            </QuickSlot>
          </Quick>
          {tabs.map(t => (
            <DocTab key={t.t} $active={t.active} $pl={t.pl}>
              <Cube3D/>
              <span>{t.t}</span>
              <TabClose><X/></TabClose>
            </DocTab>
          ))}
          <PlusTab>
            <svg width="15" height="15" viewBox="0 0 15 15"><path d="M7.500 0v15M0 7.500h15" stroke="#6c6c6c" strokeWidth="2.200"/></svg>
          </PlusTab>
          <TopIcons>
            <TopIcon $w={40}>
              <svg width="18" height="18" viewBox="0 0 18 18"><circle cx="9" cy="9" r="7.500" fill="none" stroke="#505050" strokeWidth="2.400"/><path d="M3 7l5 3 5-6 2 5-3 5H7Z" fill="#505050"/></svg>
            </TopIcon>
            <TopIcon $w={30}>
              <svg width="18" height="18" viewBox="0 0 18 18"><circle cx="9" cy="9" r="8.500" fill="#9a9a9a" stroke="#5a5a5a"/><circle cx="9" cy="9" r="6" fill="#555"/><path d="M9 5v4h4" stroke="#ddd" fill="none" strokeWidth="1.300"/></svg>
            </TopIcon>
            <TopIcon $w={36}>
              <svg width="20" height="20" viewBox="0 0 20 20"><path d="M9 2c-3 .5-4 3-4 5v4l-3 3v1h14v-1l-3-3V7C13 4.500 12 2.500 9 2ZM7 16.500h4c0 2-4 2-4 0Z" fill="#505050"/><circle cx="14" cy="4" r="3.500" fill="#0696d7"/></svg>
            </TopIcon>
            <TopIcon $w={32}>
              <svg width="18" height="18" viewBox="0 0 18 18"><circle cx="9" cy="9" r="8.500" fill="#505050"/><text x="9" y="13.500" textAnchor="middle" fontSize="13" fontWeight="bold" fontFamily={FONT} fill="#e8e8e8">?</text></svg>
            </TopIcon>
            <TopIcon $w={48}>
              <svg width="25" height="25" viewBox="0 0 25 25"><circle cx="12.500" cy="12.500" r="12.500" fill="#a9bfd6"/><path d="M12.500 2.500c3.500 0 5 3 5 6 0 3-2 5.500-2 7 0 1 5 1.500 7 5a12.500 12.500 0 0 1-20 0c2-3.500 7-4 7-5 0-1.500-2-4-2-7 0-3 1.500-6 5-6Z" fill="#4e5f74"/></svg>
            </TopIcon>
          </TopIcons>
        </TitleBar>

        <Ribbon>
          <DesignCol><DesignBtn>DESIGN<Caret $ml={5} $c="#333"/></DesignBtn></DesignCol>
          <RibbonMain>
            <RibbonTabs>
              <RibbonTab $w={56} $active>SOLID</RibbonTab>
              <RibbonTab $w={120}>SURFACE</RibbonTab>
              <RibbonTab $w={48}>MESH</RibbonTab>
              <RibbonTab $w={144}>SHEET METAL</RibbonTab>
              <RibbonTab $w={62}>PLASTIC</RibbonTab>
              <RibbonTab $w={122}>UTILITIES</RibbonTab>
            </RibbonTabs>
            <Groups>
              <Group $w={270}>
                <Tools>
                  <Tool><SketchI/></Tool><Tool $active><ExtrudeI/></Tool><Tool><RevolveI/></Tool><Tool><HoleI/></Tool><Tool><NodesI/></Tool><Tool><PurpleI/></Tool>
                </Tools>
                <GroupLabel $pr={8}>CREATE<Caret $ml={4}/></GroupLabel>
              </Group>
              <Sep/>
              <Group $w={276}>
                <Tools>
                  <Tool $w={44.4}><PressI/></Tool><Tool $w={44.4}><FilletI/></Tool><Tool $w={44.4}><ChamferI/></Tool><Tool $w={44.4}><CombineI/></Tool><Tool $w={44.4}><OffsetI/></Tool><Tool $w={44.4}><MoveI/></Tool>
                </Tools>
                <GroupLabel $pr={4}>MODIFY<Caret $ml={4}/></GroupLabel>
              </Group>
              <Sep/>
              <Group $w={99}>
                <Tools><Tool $w={45}><AssembleI/></Tool><Tool $w={45}><JointI/></Tool></Tools>
                <GroupLabel>ASSEMBLE<Caret $ml={4}/></GroupLabel>
              </Group>
              <Sep/>
              <Group $w={101}>
                <Tools><Tool><ConstructI/></Tool></Tools>
                <GroupLabel>CONSTRUCT<Caret $ml={4}/></GroupLabel>
              </Group>
              <Sep/>
              <Group $w={80}>
                <Tools><Tool><InspectI/></Tool></Tools>
                <GroupLabel>INSPECT<Caret $ml={4}/></GroupLabel>
              </Group>
              <Sep/>
              <Group $w={70}>
                <Tools><Tool><InsertI/></Tool></Tools>
                <GroupLabel>INSERT<Caret $ml={4}/></GroupLabel>
              </Group>
              <Sep/>
              <Group $w={76}>
                <Tools><Tool><SelectI/></Tool></Tools>
                <GroupLabel>SELECT<Caret $ml={4}/></GroupLabel>
              </Group>
            </Groups>
          </RibbonMain>
        </Ribbon>

        <Canvas>
          <Sketch/>

          <SidePanel $top={5}>
            <PanelLeft>
              <svg width="9" height="7" viewBox="0 0 9 7"><path d="M4 0v7L0 3.500ZM9 0v7L5 3.500Z" fill="#333"/></svg>
            </PanelLeft>
            BROWSER
            <PanelEnd><CircMinus/><Handle/></PanelEnd>
          </SidePanel>

          <Tree>
            <TreeRow $pl={9}>
              <svg width="13" height="14" viewBox="0 0 13 14"><path d="M12 1v12H1Z" fill="#eee" stroke="#444" strokeWidth="1.200"/><path d="M12 1v12H8Z" fill="#555"/></svg>
              <Chip $w={152} $ml={8}>
                <ChipIcon $l={2}><Eye/></ChipIcon>
                <SelBar>(Unsaved)</SelBar>
                <ChipIcon $l={27}>
                  <svg width="17" height="17" viewBox="0 0 17 17"><path d="M1 5 5 1h11v11l-3 4H1Z" fill="#e6e6e6" stroke="#666"/><path d="M1 5h12v11M13 5l3-4" fill="none" stroke="#666"/></svg>
                </ChipIcon>
                <ChipIcon $l={130}>
                  <svg width="15" height="15" viewBox="0 0 15 15"><circle cx="7.500" cy="7.500" r="6.500" fill="#f4f4f4" stroke="#555" strokeWidth="1.200"/><circle cx="7.500" cy="7.500" r="2.200" fill="#333"/></svg>
                </ChipIcon>
              </Chip>
            </TreeRow>
            <TreeRow $pl={29}>
              <Tri/>
              <Chip $w={138} $ml={8}>
                <ChipIcon $l={3}><Gear/></ChipIcon>
                <ChipText $l={34}>Document Settings</ChipText>
              </Chip>
            </TreeRow>
            <TreeRow $pl={29}>
              <Tri/>
              <Chip $w={113} $ml={8}>
                <ChipIcon $l={3}><Folder/></ChipIcon>
                <ChipText $l={34}>Named Views</ChipText>
              </Chip>
            </TreeRow>
            <TreeRow $pl={29}>
              <Tri/>
              <Chip $w={98} $ml={8}>
                <ChipIcon $l={3}><Eye off/></ChipIcon>
                <ChipIcon $l={28}><Folder/></ChipIcon>
                <ChipText $l={60}>Origin</ChipText>
              </Chip>
            </TreeRow>
            <TreeRow $pl={29}>
              <Tri/>
              <Chip $w={118} $ml={8}>
                <ChipIcon $l={3}><Eye/></ChipIcon>
                <ChipIcon $l={28}><Folder/></ChipIcon>
                <ChipText $l={60}>Sketches</ChipText>
                <Wave width="92" height="4" viewBox="0 0 92 4"><path d="M0 3 3 1l3 2 3-2 3 2 3-2 3 2 3-2 3 2 3-2 3 2 3-2 3 2 3-2 3 2 3-2 3 2 3-2 3 2 3-2 3 2 3-2 3 2 3-2 3 2 3-2 3 2 3-2 3 2 3-2" fill="none" stroke="#4a6aa0" strokeWidth="1.200" strokeDasharray="2 1"/></Wave>
              </Chip>
            </TreeRow>
          </Tree>

          <SidePanel $top={612}>
            COMMENTS
            <PanelEnd><CircMinus plus/><Handle/></PanelEnd>
          </SidePanel>

          <NavBar>
            <NavSlot $w={34}><Orbit/><Caret $ml={3}/></NavSlot>
            <NavSlot $w={27}><LookAt/></NavSlot>
            <NavSlot $w={25}><Hand/></NavSlot>
            <NavSlot $w={26}><ZoomI extra/></NavSlot>
            <NavSlot $w={36}><ZoomI s={21}/><Caret $ml={5}/></NavSlot>
            <NavSlot $w={31}><Display/><Caret $ml={3}/></NavSlot>
            <NavSlot $w={33}><GridI/><Caret $ml={4}/></NavSlot>
            <NavSlot $w={28}><Views/><Caret $ml={4}/></NavSlot>
          </NavBar>

          <Status>1 Profile | Area : 591.334 mm^2</Status>

          <AxisLetter $l={1481} $t={20} $c="#a8f0a8">Y</AxisLetter>
          <AxisLetter $l={1531} $t={71} $c="#f4a0a0">X</AxisLetter>
          <AxisLetter $l={1475} $t={77} $c="#9a9af4">Z</AxisLetter>
          <Cube><CubeFace>TOP</CubeFace></Cube>

          <DimBox>
            <Grip/>
            <DimInput>th<TextCaret/></DimInput>
            <Kebab><Dot/><Dot/><Dot/></Kebab>
          </DimBox>
          <Drop>
            <DropRow $on><DropKey>thickness</DropKey>User Parameter (mm)</DropRow>
            <DropRow><DropKey>width</DropKey>User Parameter (mm)</DropRow>
          </Drop>
          <Tip>User Parameter (mm)</Tip>

          <Panel>
            <PanelHead>
              <HeadGrip/>
              <CircMinus/>
              <HeadTitle>EXTRUDE</HeadTitle>
              <Spacer/>
              <svg width="11" height="7" viewBox="0 0 11 7"><path d="M0 0v7l5-3.500ZM6 0v7l5-3.500Z" fill="#333"/></svg>
            </PanelHead>
            <PanelBody>
              <Row>
                <RowLabel>Type</RowLabel>
                <TypeBtn $on>
                  <svg width="20" height="22" viewBox="0 0 20 22"><path d="M1 4 4 1h10v14l-3 4H1Z" fill="#a9daf9"/><path d="M1 16h10v3H1Z" fill="#eef"/><path d="M17 16V3" stroke="#fff" strokeWidth="1.300"/></svg>
                </TypeBtn>
                <TypeBtn>
                  <svg width="20" height="22" viewBox="0 0 20 22"><path d="M1 5 4 2h10l2 14-8 2-6 1Z" fill="#4f9edc"/><path d="M1 5h10l2 13H2Z" fill="#7cbcf0"/><path d="M18 16V3" stroke="#444" strokeWidth="1.300"/></svg>
                </TypeBtn>
              </Row>
              <Row>
                <RowLabel>Profiles</RowLabel>
                <PickBtn><Arrow/>1 selected</PickBtn>
                <ClearX><X c="#555"/></ClearX>
              </Row>
              <Row><RowLabel>Start</RowLabel><Dropdown icon={<StartI/>} label="Profile Plane"/></Row>
              <Row><RowLabel>Direction</RowLabel><Dropdown icon={<DirI/>} label="One Side"/></Row>
              <Row><RowLabel>Extent Type</RowLabel><Dropdown icon={<ExtI/>} label="Distance"/></Row>
              <Row><RowLabel>Distance</RowLabel><Input>0.00 mm</Input></Row>
              <Row><RowLabel>Taper Angle</RowLabel><Input>0.0 deg</Input></Row>
              <Rule/>
              <Row><RowLabel>Operation</RowLabel><Dropdown icon={<BodyI/>} label="New Body"/></Row>
            </PanelBody>
            <PanelFoot>
              <svg width="13" height="13" viewBox="0 0 13 13"><circle cx="6.500" cy="6.500" r="6.500" fill="#111"/><rect x="5.500" y="5.500" width="2.400" height="5" fill="#fff"/><circle cx="6.700" cy="3.400" r="1.300" fill="#fff"/></svg>
              <Spacer/>
              <FootBtn $off>OK</FootBtn>
              <FootBtn>Cancel</FootBtn>
            </PanelFoot>
          </Panel>
        </Canvas>

        <Timeline>
          <Player>
            <PlayBtn><svg width="13" height="18" viewBox="0 0 13 18"><path d="M0 0h2.500v18H0ZM12 0v18L2.500 9Z" fill="#505050"/></svg></PlayBtn>
            <PlayBtn><svg width="14" height="18" viewBox="0 0 14 18"><path d="M9 0v18L0 9ZM11 4h3v10h-3Z" fill="#505050"/></svg></PlayBtn>
            <PlayBtn><svg width="13" height="18" viewBox="0 0 13 18"><path d="M0 0v18L13 9Z" fill="#505050"/></svg></PlayBtn>
            <PlayBtn><svg width="14" height="18" viewBox="0 0 14 18"><path d="M5 0v18L14 9ZM0 4h3v10H0Z" fill="#505050"/></svg></PlayBtn>
            <PlayBtn><svg width="13" height="18" viewBox="0 0 13 18"><path d="M0 0v18L10 9ZM10.500 0H13v18h-2.500Z" fill="#505050"/></svg></PlayBtn>
          </Player>
          <Feature>
            <svg width="16" height="16" viewBox="0 0 16 16"><rect x="1" y="1" width="12" height="12" fill="none" stroke="#345" strokeWidth="1.200"/><path d="M9 14l5-4" stroke="#f2a83a" strokeWidth="2.500"/></svg>
            <Flag/>
          </Feature>
          <GearEnd><Gear c="#8a8a8a" s={15}/></GearEnd>
        </Timeline>
      </Screen>
      <ScrollStrip><ScrollThumb/></ScrollStrip>
    </Page>
  );
}
